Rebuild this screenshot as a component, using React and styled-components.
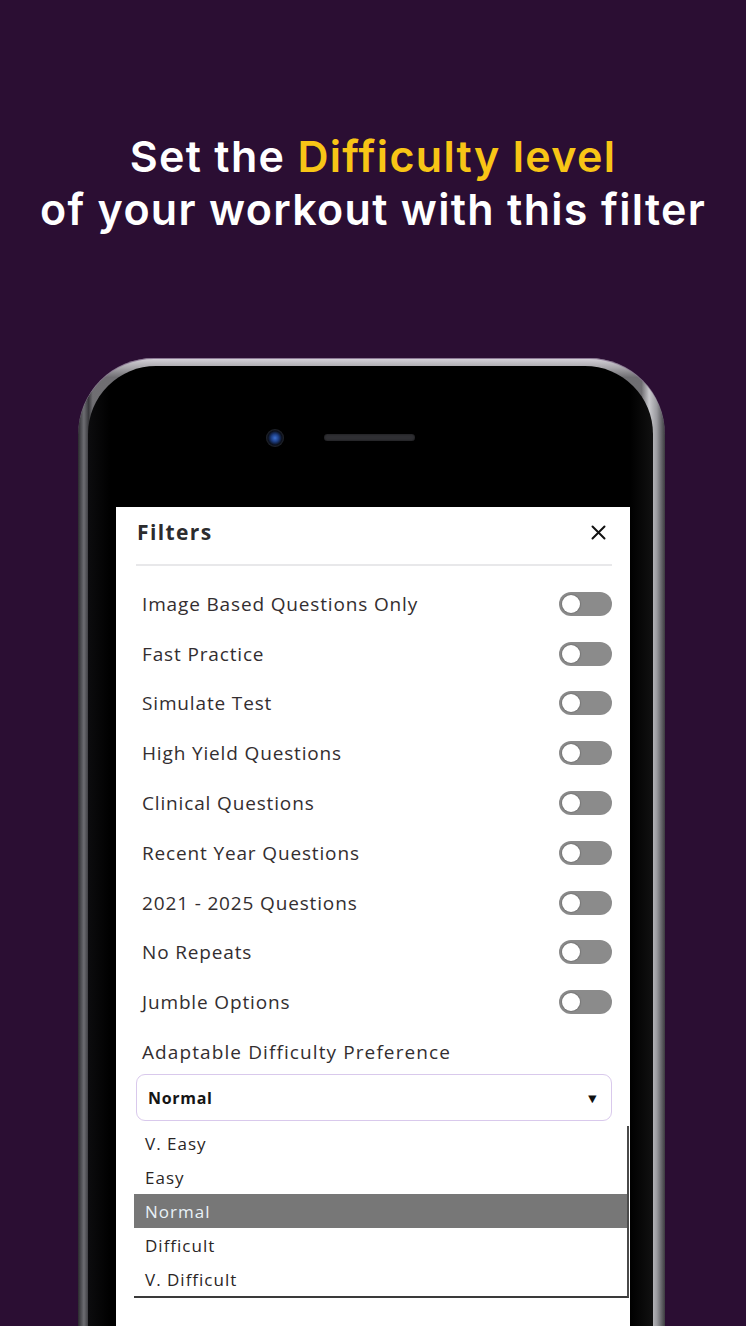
import React from "react";
import styled, { createGlobalStyle } from "styled-components";

const Global = createGlobalStyle`
  html, body { margin: 0; padding: 0; background: #2b0e33; }
  body { overflow: hidden; }
  * { box-sizing: border-box; }
`;

const Page = styled.div`
  width: 746px;
  height: 1326px;
  overflow: hidden;
  background: #2b0e33;
  display: flex;
  flex-direction: column;
  align-items: center;
  font-family: "Open Sans", "Noto Sans", sans-serif;
`;

const Headline = styled.h1`
  margin: 130px 0 0;
  font-family: Inter, "Open Sans", sans-serif;
  font-size: 43px;
  font-weight: 600;
  color: #ffffff;
  text-align: center;
  letter-spacing: 1.3px;
  display: flex;
  flex-direction: column;
`;

const Line = styled.span`
  display: block;
  line-height: 53px;
  height: 53px;
  white-space: nowrap;
`;

const Accent = styled.span`
  color: #f8c516;
`;

const Phone = styled.div`
  margin-top: 122px;
  margin-left: -3px;
  width: 587px;
  flex: 1;
  border-radius: 76px 76px 0 0;
  padding: 8px 12px 0 10px;
  background:
    linear-gradient(90deg, #2a2a2e 0%, #6d6d72 1%, #3a3a3e 1.8%, rgba(0,0,0,0) 2.5%, rgba(0,0,0,0) 96%, #c9c9cd 97.3%, #9a9a9f 98.6%, #3c3c40 100%),
    linear-gradient(180deg, #d8d4dc 0%, #a8a6ab 1%, #6f6e72 2%, #8c8b90 100%);
  box-shadow: inset 0 1px 0 #8d7a96;
`;

const Bezel = styled.div`
  height: 100%;
  border-radius: 68px 68px 0 0;
  background: linear-gradient(90deg, #0c0c0e 0%, #000 4%, #000 96%, #111 100%);
  padding: 0 23px 0 28px;
  display: flex;
  flex-direction: column;
`;

const TopBar = styled.div`
  height: 141px;
  flex-shrink: 0;
  display: flex;
  align-items: center;
  padding-left: 150px;
  padding-top: 2px;
  gap: 40px;
`;

const Camera = styled.div`
  width: 18px;
  height: 18px;
  border-radius: 50%;
  background: radial-gradient(circle, #3b6fd0 0%, #1c3c80 30%, #0b0f1a 55%, #2a2d33 75%, #101114 100%);
`;

const Speaker = styled.div`
  width: 91px;
  height: 7px;
  border-radius: 4px;
  background: #2f2f33;
  box-shadow: inset 0 0 2px #111;
`;

const Screen = styled.div`
  flex: 1;
  background: #ffffff;
  padding: 0 18px 0 20px;
  display: flex;
  flex-direction: column;
  font-family: "Open Sans", "Noto Sans", sans-serif;
`;

const Header = styled.div`
  height: 50px;
  display: flex;
  align-items: center;
  justify-content: space-between;
  padding: 0 6px 0 1px;
`;

const Title = styled.div`
  font-size: 21px;
  font-weight: 700;
  color: #2c2c2e;
  letter-spacing: 1.4px;
`;

const Close = styled.div`
  width: 16px;
  height: 16px;
  display: flex;
  align-items: center;
  justify-content: center;
`;

const Divider = styled.div`
  margin-top: 7px;
  height: 2px;
  background: #e8e8ea;
`;

const Rows = styled.div`
  margin-top: 13px;
  display: flex;
  flex-direction: column;
`;

const Row = styled.div`
  height: 49.8px;
  display: flex;
  align-items: center;
  justify-content: space-between;
  padding-left: 6px;
`;

const Label = styled.div`
  font-size: 19px;
  color: #332e30;
  letter-spacing: 0.85px;
`;

const Track = styled.div`
  width: 53px;
  height: 24px;
  border-radius: 12px;
  background: #8b8b8b;
  display: flex;
  align-items: center;
  padding-left: 3px;
`;

const Knob = styled.div`
  width: 18px;
  height: 18px;
  border-radius: 50%;
  background: #ffffff;
  box-shadow: 0 0 1px 1px #777;
`;

const SectionLabel = styled(Label)`
  margin-top: 13px;
  line-height: 24px;
  padding-left: 6px;
  letter-spacing: 1.1px;
`;

const Select = styled.div`
  margin-top: 10px;
  height: 47px;
  border: 1.5px solid #d9c9ec;
  border-radius: 9px;
  display: flex;
  align-items: center;
  justify-content: space-between;
  padding: 0 12px 0 11px;
`;

const SelectValue = styled.div`
  font-size: 16px;
  font-weight: 700;
  color: #151515;
  letter-spacing: 0.7px;
`;

const Caret = styled.div`
  font-size: 13px;
  color: #111;
  transform: scaleX(1.1);
`;

const OptionList = styled.div`
  margin: 5px -17px 0 -2px;
  border-right: 2px solid #4a4a4a;
  border-bottom: 2px solid #3a3a3a;
  display: flex;
  flex-direction: column;
`;

const Option = styled.div`
  height: 34px;
  display: flex;
  align-items: center;
  padding-left: 11px;
  font-size: 17px;
  letter-spacing: 1px;
  color: ${p => (p.$active ? "#e9f2f7" : "#2a2526")};
  background: ${p => (p.$active ? "#777777" : "#ffffff")};
`;

const filters = [
  "Image Based Questions Only",
  "Fast Practice",
  "Simulate Test",
  "High Yield Questions",
  "Clinical Questions",
  "Recent Year Questions",
  "2021 - 2025 Questions",
  "No Repeats",
  "Jumble Options",
];

const options = ["V. Easy", "Easy", "Normal", "Difficult", "V. Difficult"];

export default function App() {
  return (
    <Page>
      <Global />
      <Headline>
        <Line>
          Set the <Accent>Difficulty level</Accent>
        </Line>
        <Line>of your workout with this filter</Line>
      </Headline>
      <Phone>
        <Bezel>
          <TopBar>
            <Camera />
            <Speaker />
          </TopBar>
          <Screen>
            <Header>
              <Title>Filters</Title>
              <Close>
                <svg width="15" height="15" viewBox="0 0 15 15">
                  <path d="M1.5 1.5 L13.5 13.5 M13.5 1.5 L1.5 13.5" stroke="#111" strokeWidth="2" strokeLinecap="round" />
                </svg>
              </Close>
            </Header>
            <Divider />
            <Rows>
              {filters.map(f => (
                <Row key={f}>
                  <Label>{f}</Label>
                  <Track>
                    <Knob />
                  </Track>
                </Row>
              ))}
            </Rows>
            <SectionLabel>Adaptable Difficulty Preference</SectionLabel>
            <Select>
              <SelectValue>Normal</SelectValue>
              <Caret>▼</Caret>
            </Select>
            <OptionList>
              {options.map(o => (
                <Option key={o} $active={o === "Normal"}>
                  {o}
                </Option>
              ))}
            </OptionList>
          </Screen>
        </Bezel>
      </Phone>
    </Page>
  );
}
